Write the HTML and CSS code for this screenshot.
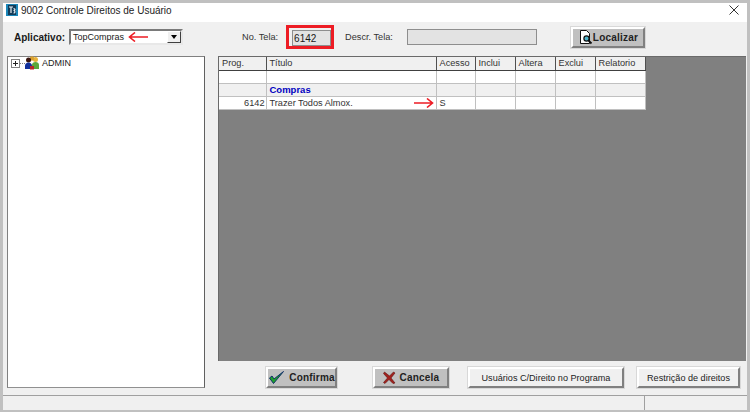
FILE: index.html
```html
<!DOCTYPE html>
<html lang="en">

<head>
  <meta charset="UTF-8">
  <title>9002 Controle Direitos de Usuário</title>
  <link rel="stylesheet" href="styles.css">
</head>

<body>
  <div class="window">
    <div class="titlebar">
      <svg class="app-icon" width="12" height="12" viewBox="0 0 12 12">
        <rect width="12" height="12" fill="#1b86b8" />
        <rect x="2" y="1" width="8" height="10" fill="#123a57" />
        <path d="M3 3h4M5 3v6M7.500 4.500c2 0 2 2 0 2c2 0 2 2.500 0 2.500" stroke="#e8eef2" stroke-width="1.200" fill="none" />
      </svg>
      <span class="title">9002 Controle Direitos de Usuário</span>
      <svg class="close" width="10" height="10" viewBox="0 0 10 10">
        <path d="M.5 .5l9 9M9.500 .5l-9 9" stroke="#333" stroke-width="1" fill="none" />
      </svg>
    </div>

    <div class="toolbar">
      <label class="app-label">Aplicativo:</label>
      <div class="combo">
        <span class="combo-text">TopCompras</span>
        <svg class="arrow-left" width="20" height="10" viewBox="0 0 20 10">
          <path d="M20 5H2M7 .5L1.500 5L7 9.500" stroke="#ed1c24" stroke-width="1.600" fill="none" />
        </svg>
        <span class="combo-btn"><i class="caret"></i></span>
      </div>
      <span class="field-label no-tela">No. Tela:</span>
      <div class="highlight"><div class="field small">6142</div></div>
      <span class="field-label descr">Descr. Tela:</span>
      <div class="field wide"></div>
      <button class="btn btn-find">
        <svg width="15" height="16" viewBox="0 0 15 16">
          <path d="M2.500 1.500h6l3 3v10h-9z" fill="#fff" stroke="#111" />
          <circle cx="8.500" cy="9.500" r="2.600" fill="#4fb6cc" stroke="#111" stroke-width="1.200" />
          <path d="M10.500 11.500l3 3" stroke="#111" stroke-width="1.800" />
        </svg>Localizar
      </button>
    </div>

    <div class="content">
      <div class="tree">
        <div class="node">
          <span class="expander"></span>
          <span class="dots"></span>
          <svg class="users" width="14" height="14" viewBox="0 0 14 14">
            <circle cx="10.500" cy="3.500" r="2.500" fill="#e8b23a" />
            <path d="M7 13v-4c0-2 1.500-3 3.500-3s3.500 1 3.500 3v4z" fill="#5aa83c" />
            <circle cx="7" cy="2.500" r="2.300" fill="#d9a030" />
            <circle cx="3.500" cy="4" r="2.500" fill="#3a1510" />
            <path d="M0 13V9.500C0 8 1.500 6.500 3.500 6.500S7 8 7 9.500V13z" fill="#12309c" />
            <path d="M5 10h4v3.500H5z" fill="#b8262a" />
          </svg>
          <span>ADMIN</span>
        </div>
      </div>

      <div class="right">
        <div class="grid-area">
          <table class="grid">
            <colgroup>
              <col class="c-prog"><col class="c-title"><col class="c-flag"><col class="c-flag2"><col class="c-flag2"><col class="c-flag2"><col class="c-rel">
            </colgroup>
            <thead>
              <tr>
                <th>Prog.</th><th>Título</th><th>Acesso</th><th>Inclui</th><th>Altera</th><th>Exclui</th><th>Relatorio</th>
              </tr>
            </thead>
            <tbody>
              <tr class="row-white"><td></td><td></td><td></td><td></td><td></td><td></td><td></td></tr>
              <tr class="row-group"><td></td><td class="group-name">Compras</td><td></td><td></td><td></td><td></td><td></td></tr>
              <tr class="row-white">
                <td class="num">6142</td>
                <td class="title-cell">Trazer Todos Almox.
                  <svg class="arrow-right" width="20" height="10" viewBox="0 0 20 10">
                    <path d="M0 5h18M13 .5L18.500 5L13 9.500" stroke="#ed1c24" stroke-width="1.600" fill="none" />
                  </svg>
                </td>
                <td>S</td><td></td><td></td><td></td><td></td>
              </tr>
            </tbody>
          </table>
        </div>

        <div class="actions">
          <button class="btn btn-ok">
            <svg width="17" height="15" viewBox="0 0 17 15">
              <path d="M1.500 8l4 5.500L15.500 1.500L6 9l-2-3z" fill="#1fa32a" stroke="#10306a" stroke-width="1" />
            </svg>Confirma
          </button>
          <button class="btn btn-cancel">
            <svg width="13" height="13" viewBox="0 0 13 13">
              <path d="M1.500 1l5 4l4-4l1.500 1l-4 5l4 5l-2 .5l-4-4l-4 4l-1.500-1l4-4.500l-4-4.500z" fill="#a3201c" stroke="#5c1210" stroke-width=".6" />
            </svg>Cancela
          </button>
          <button class="btn btn-plain btn-users">Usuários C/Direito no Programa</button>
          <button class="btn btn-plain btn-rest">Restrição de direitos</button>
        </div>
      </div>
    </div>

    <div class="statusbar">
      <div class="status-main"></div>
      <div class="status-side"></div>
    </div>
  </div>
</body>

</html>
```

FILE: styles.css
```css
* {
  box-sizing: border-box;
}

html,
body {
  margin: 0;
  padding: 0;
}

body {
  width: 750px;
  height: 412px;
  overflow: hidden;
  background-color: #c0c0c0;
  font-family: 'Liberation Sans', Arial, sans-serif;
  font-size: 9.500px;
  color: #1a1a1a;
}

.window {
  margin: 3px 3px 2px 3px;
  height: 407px;
  display: flex;
  flex-direction: column;
  background-color: #f0f0f0;
}

/* title bar */
.titlebar {
  height: 19px;
  flex: none;
  background-color: #ffffff;
  display: flex;
  align-items: center;
  padding: 0 8px 5px 3px;
}

.app-icon {
  margin-right: 3px;
}

.title {
  flex: 1;
  font-size: 10px;
  color: #222222;
}

/* top row */
.toolbar {
  height: 34px;
  flex: none;
  display: flex;
  align-items: center;
  padding: 0 0 4px 11px;
}

.app-label {
  width: 55px;
  font-weight: bold;
  font-size: 10px;
}

.combo {
  width: 114px;
  height: 16px;
  background: #ffffff;
  border: 2px solid;
  border-color: #7a7a7a #e8e8e8 #e8e8e8 #7a7a7a;
  display: flex;
  align-items: center;
  padding-left: 2px;
}

.combo-text {
  font-size: 9px;
}

.arrow-left {
  margin-left: 4px;
}

.combo-btn {
  margin-left: auto;
  width: 14px;
  height: 12px;
  background: #f0f0f0;
  border: 1px solid;
  border-color: #ffffff #404040 #404040 #ffffff;
  display: flex;
  align-items: center;
  justify-content: center;
}

.caret {
  border: 3.500px solid transparent;
  border-top: 4px solid #000000;
  border-bottom: none;
}

.field-label {
  color: #333333;
  font-size: 9.200px;
}

.no-tela {
  margin-left: 59px;
}

.highlight {
  margin-left: 8px;
  width: 48px;
  height: 24px;
  border: 3px solid #ed1c24;
  padding: 2px 0 0 3px;
  background: #f0f0f0;
}

.field {
  background: #e3e3e3;
  border: 1px solid #8e8e8e;
  height: 16px;
  line-height: 15px;
  padding-left: 1px;
  font-size: 10px;
}

.descr {
  margin-left: 11px;
}

.wide {
  width: 130px;
  margin-left: 14px;
}

.btn {
  font-family: inherit;
  font-size: 9.100px;
  color: #222222;
  background: #f0f0f0;
  padding: 0;
  border: 2px solid;
  border-color: #ffffff #808080 #808080 #ffffff;
  box-shadow: 0 0 0 1px #d8d8d8;
  display: flex;
  align-items: center;
  justify-content: center;
}

.btn-find {
  width: 74px;
  height: 21px;
  margin-left: 34px;
  background: #c0c0c0;
  font-weight: bold;
  font-size: 10px;
  letter-spacing: .2px;
}

/* main area */
.content {
  flex: 1;
  display: flex;
  padding-left: 4px;
}

.tree {
  width: 198px;
  height: 332px;
  background: #ffffff;
  border: 1px solid;
  border-color: #808080 #606060 #909090 #808080;
}

.node {
  display: flex;
  align-items: center;
  height: 14px;
  padding: 0 0 2px 3px;
  font-size: 9px;
}

.expander {
  width: 9px;
  height: 9px;
  border: 1px solid #808080;
  background:
    linear-gradient(#222222, #222222) center / 5px 1px no-repeat,
    linear-gradient(#222222, #222222) center / 1px 5px no-repeat,
    #ffffff;
}

.dots {
  width: 5px;
  border-top: 1px dotted #808080;
}

.users {
  margin-right: 3px;
}

.right {
  flex: 1;
  padding-left: 13px;
  padding-right: 1px;
  display: flex;
  flex-direction: column;
}

.grid-area {
  height: 305px;
  background: #808080;
  border-top: 1px solid #6a6a6a;
  border-left: 1px solid #6a6a6a;
}

.grid {
  border-collapse: collapse;
  table-layout: fixed;
  width: 426px;
  background: #ffffff;
  font-size: 9.200px;
  border-bottom: 1px solid #303030;
}

.c-prog {
  width: 47px;
}

.c-title {
  width: 170px;
}

.c-flag {
  width: 39px;
}

.c-flag2 {
  width: 40px;
}

.c-rel {
  width: 50px;
}

.grid th {
  height: 13px;
  padding: 0 0 0 3px;
  font-weight: normal;
  text-align: left;
  background: #f0f0f0;
  color: #333333;
  border-right: 1px solid #505050;
  border-bottom: 1px solid #404040;
  overflow: hidden;
}

.grid td {
  height: 13px;
  padding: 0 0 0 3px;
  border-right: 1px solid #c0c0c0;
  border-bottom: 1px solid #c0c0c0;
  color: #333333;
  white-space: nowrap;
}

.row-group td {
  background: #f0f0f0;
}

.grid .group-name {
  color: #0000c0;
  font-weight: bold;
  font-size: 9.500px;
}

.grid .num {
  text-align: right;
  padding-right: 1px;
}

.title-cell {
  position: relative;
}

.arrow-right {
  position: absolute;
  left: 147px;
  top: 1px;
}

/* bottom buttons */
.actions {
  margin-top: 6px;
  display: flex;
  align-items: flex-start;
}

.actions .btn {
  height: 21px;
}

.btn-ok,
.btn-cancel {
  background: #c0c0c0;
  font-weight: bold;
  font-size: 10px;
  letter-spacing: .2px;
}

.btn-ok svg,
.btn-cancel svg {
  margin-right: 4px;
}

.btn-ok {
  width: 71px;
  margin-left: 48px;
}

.btn-cancel {
  width: 76px;
  margin-left: 36px;
}

.btn-users {
  width: 156px;
  margin-left: 19px;
}

.btn-rest {
  width: 103px;
  margin-left: 13px;
}

/* status bar */
.statusbar {
  height: 15px;
  flex: none;
  display: flex;
  border-top: 1px solid #a0a0a0;
}

.status-main {
  width: 642px;
  border-right: 1px solid #a0a0a0;
}

.status-side {
  flex: 1;
}
```
